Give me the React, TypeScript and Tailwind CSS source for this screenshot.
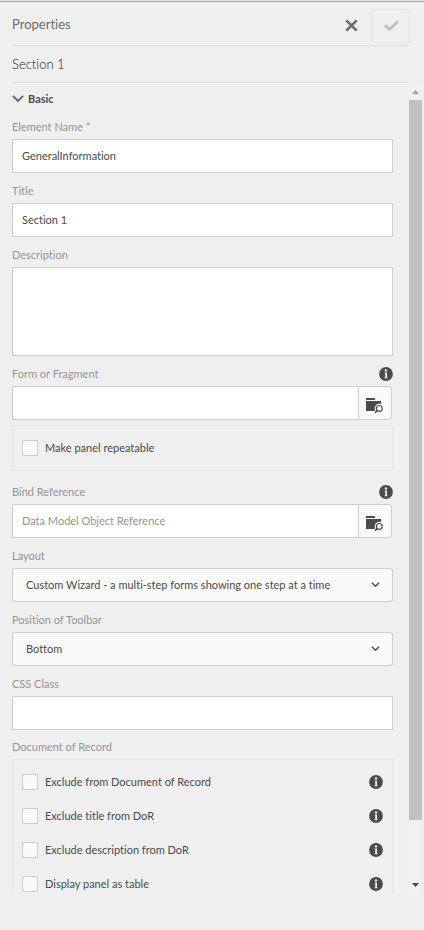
import { useId, type ReactNode } from "react";

const inputClass =
  "block h-[34px] w-full border border-[#cecece] bg-white px-[9px] pb-0.5 text-[11px] text-[#4b4b4b] outline-none placeholder:text-[#959595] focus:border-[#326ec8]";

function InfoIcon() {
  return (
    <svg viewBox="0 0 14 14" className="size-3.5" aria-hidden="true">
      <circle cx="7" cy="7" r="6.9" fill="#4b4b4b" />
      <circle cx="7" cy="3.4" r="1.2" fill="#efefef" />
      <path d="M5.5 5.4H8v5h.6v.8H5.5v-.8h.7V6.2h-.7z" fill="#efefef" />
    </svg>
  );
}

function FolderSearchIcon() {
  return (
    <svg viewBox="0 0 18 16" className="mt-1.5 h-4 w-[18px]" aria-hidden="true">
      <path d="M0 0h8.5l.8 2H0zM0 3h15.2v10H0z" fill="#4b4b4b" />
      <circle cx="13.3" cy="10.4" r="4.6" fill="#fafafa" />
      <path d="M10.8 10.6 7 14.6h4z" fill="#fafafa" />
      <circle cx="13.3" cy="10.4" r="2.9" fill="#fafafa" stroke="#4b4b4b" strokeWidth="1.2" />
      <path d="M11.3 12.4 9 14.7" stroke="#4b4b4b" strokeWidth="1.6" />
    </svg>
  );
}

function Chevron({ className }: { className: string }) {
  return (
    <svg viewBox="0 0 12 7" className={className} fill="none" aria-hidden="true">
      <path d="M1 1l5 5 5-5" stroke="currentColor" strokeWidth="1.9" />
    </svg>
  );
}

function InfoButton({ topic }: { topic: string }) {
  return (
    <button type="button" aria-label={`About ${topic}`} className="shrink-0">
      <InfoIcon />
    </button>
  );
}

function Field({
  label,
  info,
  children,
}: {
  label: string;
  info?: boolean;
  children: (id: string) => ReactNode;
}) {
  const id = useId();
  return (
    <div className="pt-[9px]">
      <div className="mb-[3px] flex h-[18px] items-center justify-between">
        <label htmlFor={id} className="text-[11px] leading-[18px] text-[#959595]">
          {label}
        </label>
        {info && <InfoButton topic={label} />}
      </div>
      {children(id)}
    </div>
  );
}

function Browse({ id, placeholder }: { id: string; placeholder?: string }) {
  return (
    <div className="mr-px flex">
      <input id={id} type="text" placeholder={placeholder} className={inputClass} />
      <button
        type="button"
        aria-label="Browse"
        className="-ml-px flex h-[34px] w-[34px] shrink-0 items-center justify-center rounded-r-[3px] border border-[#cecece] bg-[#fafafa]"
      >
        <FolderSearchIcon />
      </button>
    </div>
  );
}

function Dropdown({ id, value }: { id: string; value: string }) {
  return (
    <div className="relative">
      <select
        id={id}
        className="block h-[34px] w-full appearance-none rounded-[3px] border border-[#cecece] bg-[#fafafa] pr-8 pl-[13px] text-[11px] text-[#4b4b4b] outline-none"
      >
        <option>{value}</option>
      </select>
      <span className="pointer-events-none absolute inset-y-0 right-[13px] flex items-center text-[#4b4b4b]">
        <Chevron className="mb-0.5 h-[5px] w-[9px]" />
      </span>
    </div>
  );
}

function Check({ label, info }: { label: string; info?: boolean }) {
  return (
    <div className="flex h-[34px] items-center justify-between px-[9px]">
      <label className="flex items-center gap-[7px] text-[11px] leading-[18px] text-[#4b4b4b]">
        <input
          type="checkbox"
          className="size-4 appearance-none border border-[#cecece] bg-[#fafafa] checked:bg-[#4b4b4b]"
        />
        {label}
      </label>
      {info && <InfoButton topic={label} />}
    </div>
  );
}

export default function App() {
  return (
    <div className="flex h-screen flex-col border-t border-[#e4e4e4] bg-[#efefef] pb-[35px] pl-3 font-['Lato',sans-serif] [font-variant-ligatures:none]">
      <div className="-ml-3 h-px shrink-0 bg-[#a5a5a5]" />
      <header className="mr-[15px] flex h-11 shrink-0 items-center justify-between border-b border-[#e0e0e0]">
        <h1 className="text-[13px] leading-5 text-[#6b6b6b]">Properties</h1>
        <div className="-mr-px flex items-center gap-3.5">
          <button type="button" aria-label="Close" className="mt-1">
            <svg viewBox="0 0 13 13" className="size-[13px]" aria-hidden="true">
              <path d="M1.3 1.3l10.4 10.4M11.7 1.3 1.3 11.7" stroke="#6b6b6b" strokeWidth="2.6" />
            </svg>
          </button>
          <button
            type="button"
            aria-label="Done"
            disabled
            className="mt-2 mb-[3px] flex h-[34px] w-[38px] items-center justify-center rounded-[3px] border border-[#e4e4e4] pb-0.5"
          >
            <svg viewBox="0 0 15 11" className="h-[11px] w-[15px]" fill="none" aria-hidden="true">
              <path d="M1 5.3l4.5 4.2L14 1.2" stroke="#bebebe" strokeWidth="2.6" />
            </svg>
          </button>
        </div>
      </header>
      <h2 className="mr-[15px] h-[37px] shrink-0 border-b border-[#e0e0e0] text-[13px] leading-9 font-light text-[#222222]">
        Section 1
      </h2>

      <div className="flex min-h-0 flex-1">
        <main className="mr-4 min-w-0 flex-1 overflow-y-auto [scrollbar-width:none]">
          <button
            type="button"
            className="mt-1.5 flex h-[20px] items-center gap-1 text-[11px] font-bold text-[#4b4b4b]"
          >
            <Chevron className="mb-0.5 h-[7px] w-3 text-[#6b6b6b]" />
            Basic
          </button>

          <Field label="Element Name *">
            {(id) => <input id={id} type="text" defaultValue="GeneralInformation" className={inputClass} />}
          </Field>
          <Field label="Title">
            {(id) => <input id={id} type="text" defaultValue="Section 1" className={inputClass} />}
          </Field>
          <Field label="Description">
            {(id) => (
              <textarea
                id={id}
                className="block h-[89px] w-full resize-none border border-[#cecece] bg-white p-[9px] text-[11px] text-[#4b4b4b] outline-none"
              />
            )}
          </Field>
          <Field label="Form or Fragment" info>
            {(id) => <Browse id={id} />}
          </Field>
          <div className="mt-[5px] mb-[3px] border border-[#e6e6e6] py-[5px]">
            <Check label="Make panel repeatable" />
          </div>
          <Field label="Bind Reference" info>
            {(id) => <Browse id={id} placeholder="Data Model Object Reference" />}
          </Field>
          <Field label="Layout">
            {(id) => (
              <Dropdown id={id} value="Custom Wizard - a multi-step forms showing one step at a time" />
            )}
          </Field>
          <Field label="Position of Toolbar">{(id) => <Dropdown id={id} value="Bottom" />}</Field>
          <Field label="CSS Class">
            {(id) => <input id={id} type="text" className={inputClass} />}
          </Field>
          <section className="pt-2">
            <h3 className="mb-[3px] text-[11px] leading-[18px] text-[#959595]">Document of Record</h3>
            <div className="border border-[#e6e6e6] py-[5px]">
              <Check label="Exclude from Document of Record" info />
              <Check label="Exclude title from DoR" info />
              <Check label="Exclude description from DoR" info />
              <Check label="Display panel as table" info />
            </div>
          </section>
        </main>

        <div className="mr-0.5 flex w-[13px] shrink-0 flex-col bg-[#f0f0f0]" aria-hidden="true">
          <div className="flex h-[17px] items-center justify-center">
            <svg viewBox="0 0 7 4" className="h-1 w-[7px]">
              <path d="M0 4 3.5 0 7 4z" fill="#a0a0a0" />
            </svg>
          </div>
          <div className="min-h-0 flex-1">
            <div className="h-[92.5%] bg-[#c1c1c1]" />
          </div>
          <div className="flex h-[17px] items-start justify-center pt-[5px]">
            <svg viewBox="0 0 7 4" className="h-1 w-[7px]">
              <path d="M0 0 3.5 4 7 0z" fill="#4b4b4b" />
            </svg>
          </div>
        </div>
      </div>
    </div>
  );
}
